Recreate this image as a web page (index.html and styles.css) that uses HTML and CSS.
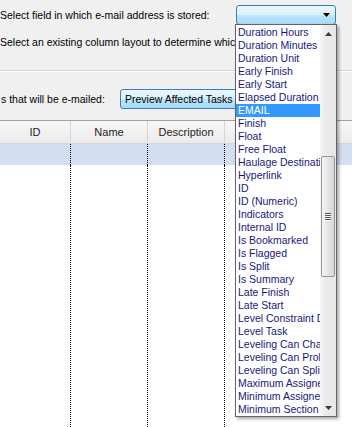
FILE: index.html
```html
<!DOCTYPE html>
<html>
	<head>
		<meta name="viewport" content="width=device-width, initial-scale=1.0">
		<title>E-mail tasks</title>
		<link rel="stylesheet" href="styles.css">
	</head>
	<body>
	<div class="options">
		<div class="field_row">
			<span class="field_label">Select field in which e-mail address is stored:</span>
			<div class="combo">
				<svg class="combo_arrow" width="7" height="4" viewBox="0 0 7 4"><path d="M0 0h7L3.5 4z" fill="#000"/></svg>
			</div>
		</div>
		<div class="layout_row">Select an existing column layout to determine which columns will be shown:</div>
		<div class="separator"></div>
		<div class="preview_row">
			<span class="preview_label">s that will be e-mailed:</span>
			<button type="button" class="blue_button">Preview Affected Tasks</button>
		</div>
	</div>

	<div class="grid">
		<div class="grid_head">
			<div class="hcell col_id">ID</div>
			<div class="hcell col_name">Name</div>
			<div class="hcell col_desc">Description</div>
			<div class="hcell col_rest"></div>
		</div>
		<div class="grid_row selected">
			<div class="cell col_id"></div>
			<div class="cell col_name"></div>
			<div class="cell col_desc"></div>
			<div class="cell col_rest"></div>
		</div>
		<div class="grid_row filler">
			<div class="cell col_id"></div>
			<div class="cell col_name"></div>
			<div class="cell col_desc"></div>
			<div class="cell col_rest"></div>
		</div>
	</div>

	<!-- open combo list, drawn over the page -->
	<div class="dropdown">
		<ul class="field_list">
			<li>Duration Hours</li>
			<li>Duration Minutes</li>
			<li>Duration Unit</li>
			<li>Early Finish</li>
			<li>Early Start</li>
			<li>Elapsed Duration</li>
			<li class="picked">EMAIL</li>
			<li>Finish</li>
			<li>Float</li>
			<li>Free Float</li>
			<li>Haulage Destination</li>
			<li>Hyperlink</li>
			<li>ID</li>
			<li>ID (Numeric)</li>
			<li>Indicators</li>
			<li>Internal ID</li>
			<li>Is Bookmarked</li>
			<li>Is Flagged</li>
			<li>Is Split</li>
			<li>Is Summary</li>
			<li>Late Finish</li>
			<li>Late Start</li>
			<li>Level Constraint Date</li>
			<li>Level Task</li>
			<li>Leveling Can Change</li>
			<li>Leveling Can Prolong</li>
			<li>Leveling Can Split</li>
			<li>Maximum Assigned</li>
			<li>Minimum Assigned</li>
			<li>Minimum Section Length</li>
		</ul>
		<div class="scrollbar">
			<div class="sb_button">
				<svg width="7" height="4" viewBox="0 0 7 4"><path d="M0 4h7L3.5 0z" fill="#3a3a3a"/></svg>
			</div>
			<div class="sb_track">
				<div class="sb_thumb">
					<span class="grip"></span>
					<span class="grip"></span>
					<span class="grip"></span>
					<span class="grip"></span>
				</div>
			</div>
			<div class="sb_button">
				<svg width="7" height="4" viewBox="0 0 7 4"><path d="M0 0h7L3.5 4z" fill="#3a3a3a"/></svg>
			</div>
		</div>
	</div>
	</body>
</html>
```

FILE: styles.css
```css
	body
	{
		margin: 0;
		background: #f0f0f0;
		font-family: 'Liberation Sans', Arial, sans-serif;
		font-size: 10.5px;
		color: #000;
		width: 352px;
		height: 427px;
		overflow: hidden;
		position: relative;
	}
	.options
	{
		height: 120px;
	}
	.field_row
	{
		display: flex;
		align-items: center;
		padding-top: 5px;
		height: 20px;
	}
	.field_label
	{
		width: 236px;
		white-space: nowrap;
	}
	.combo
	{
		width: 98px;
		height: 18px;
		border: 1px solid #3c7fb1;
		border-radius: 3px;
		background: linear-gradient(#eaf6fd, #d9f0fc 50%, #bee6fd 50%, #a7d9f5);
		display: flex;
		align-items: center;
		justify-content: flex-end;
	}
	.combo_arrow
	{
		margin-right: 5px;
	}
	.layout_row
	{
		margin-top: 4px;
		width: 235px;
		line-height: 27px;
		white-space: nowrap;
		overflow: hidden;
	}
	.separator
	{
		margin-top: 14px;
		border-top: 1px solid #d5d5d5;
		border-bottom: 1px solid #fff;
	}
	.preview_row
	{
		display: flex;
		align-items: center;
		margin-top: 17px;
		height: 20px;
	}
	.preview_label
	{
		width: 120px;
		padding-left: 1px;
		box-sizing: border-box;
		white-space: nowrap;
	}
	.blue_button
	{
		width: 140px;
		height: 20px;
		padding: 0 0 0 4px;
		text-align: left;
		font: inherit;
		color: #000;
		border: 1px solid #3c7fb1;
		border-radius: 3px;
		background: linear-gradient(#eaf6fd, #d9f0fc 50%, #bee6fd 50%, #a7d9f5);
	}
	.grid
	{
		background: #fff;
		height: 307px;
		display: flex;
		flex-direction: column;
		font-size: 11px;
	}
	.grid_head
	{
		display: flex;
		height: 22px;
		border-top: 1px solid #a0a0a0;
		border-bottom: 1px solid #d5d5d5;
		background: linear-gradient(#f6f6f6, #ebebeb);
	}
	.hcell
	{
		line-height: 22px;
		text-align: center;
		border-right: 1px solid #d5d5d5;
		color: #1e1e1e;
	}
	.col_id { width: 70px; }
	.col_name { width: 76px; }
	.col_desc { width: 76px; }
	.col_rest { flex: 1; border-right: none; }
	.grid_row
	{
		display: flex;
	}
	.grid_row.selected
	{
		height: 21px;
		background: #d4def1;
	}
	.grid_row.filler
	{
		flex: 1;
	}
	.cell
	{
		border-right: 1px dotted #000;
	}
	.cell.col_rest
	{
		border-right: none;
	}
	.dropdown
	{
		position: absolute;
		left: 235px;
		top: 24px;
		width: 100px;
		height: 391px;
		border: 1px solid #646464;
		background: #fff;
		box-shadow: 2px 2px 3px rgba(0, 0, 0, 0.35);
		display: flex;
		font-size: 10.5px;
	}
	.field_list
	{
		list-style: none;
		margin: 0;
		padding: 1px 0 0 0;
		width: 84px;
		overflow: hidden;
	}
	.field_list li
	{
		height: 13px;
		line-height: 13px;
		padding-left: 2px;
		white-space: nowrap;
		color: #17177c;
	}
	.field_list li.picked
	{
		background: #3399ff;
		color: #fff;
	}
	.scrollbar
	{
		width: 16px;
		display: flex;
		flex-direction: column;
		background: linear-gradient(to right, #f7f7f7, #ececec 30%, #e6e6e6);
	}
	.sb_button
	{
		height: 17px;
		display: flex;
		align-items: center;
		justify-content: center;
	}
	.sb_track
	{
		flex: 1;
		padding-top: 114px;
	}
	.sb_thumb
	{
		height: 119px;
		margin: 0 1px;
		border: 1px solid #979797;
		border-radius: 2px;
		background: linear-gradient(to right, #f4f4f4, #e6e6e6 45%, #d6d6d6);
		display: flex;
		flex-direction: column;
		align-items: center;
		justify-content: center;
		gap: 1px;
	}
	.grip
	{
		width: 6px;
		height: 1px;
		background: #555;
		box-shadow: 0 1px 0 #fff;
	}
```
